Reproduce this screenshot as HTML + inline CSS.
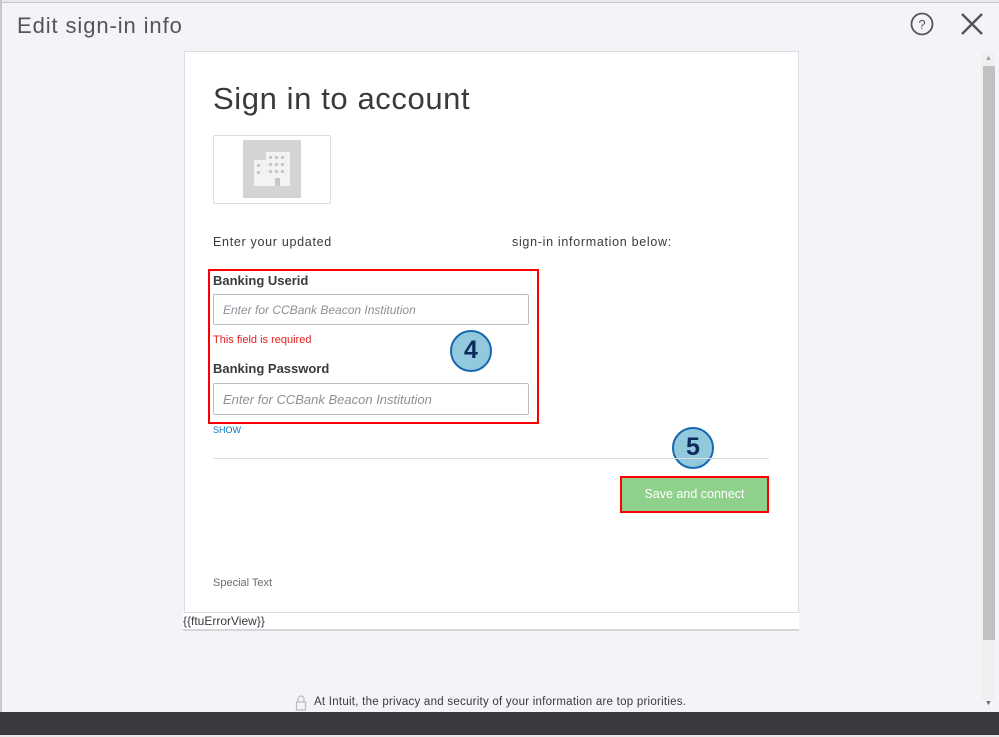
<!DOCTYPE html>
<html><head><style>
*{margin:0;padding:0;box-sizing:border-box}
body{width:999px;height:737px;overflow:hidden;background:#f3f4f7;font-family:"Liberation Sans",sans-serif;position:relative;color:#393a3d}
.a{position:absolute}
</style></head><body>
<div class="a" style="left:0;top:0;width:999px;height:3px;background:#e8e8ea;border-bottom:1px solid #c8c8cc"></div>
<div class="a" style="left:0;top:0;width:2px;height:712px;background:#c8c8cc"></div>
<div class="a" style="left:17px;top:13px;font-size:22px;color:#555;letter-spacing:0.9px">Edit sign-in info</div>
<svg class="a" style="left:910px;top:12px" width="26" height="26"><circle cx="12" cy="12" r="10.5" fill="none" stroke="#555" stroke-width="1.8"/><text x="12" y="17" font-size="13" text-anchor="middle" fill="#555" font-family="Liberation Sans">?</text></svg>
<svg class="a" style="left:960px;top:12px" width="24" height="24"><path d="M2 2L22 22M22 2L2 22" stroke="#555" stroke-width="2.4"/></svg>
<div class="a" style="left:981px;top:52px;width:14px;height:648px;background:#f0f0f0"></div>
<div class="a" style="left:983px;top:66px;width:12px;height:574px;background:#c1c1c1"></div>
<div class="a" style="left:985px;top:55px;font-size:7px;color:#999">▲</div>
<div class="a" style="left:985px;top:700px;font-size:7px;color:#666">▼</div>
<div class="a" style="left:184px;top:51px;width:615px;height:562px;background:#fff;border:1px solid #dcdde0"></div>
<div class="a" style="left:213px;top:81px;font-size:31px;color:#393a3d;letter-spacing:0.6px">Sign in to account</div>
<div class="a" style="left:213px;top:135px;width:118px;height:69px;border:1px solid #dcdde0;border-radius:2px;background:#fff"></div>
<div class="a" style="left:243px;top:140px;width:58px;height:58px;background:#d4d4d6"></div>
<svg class="a" style="left:243px;top:140px" width="58" height="58"><rect x="11" y="20" width="12" height="26" fill="#f3f3f3"/><rect x="23" y="12" width="24" height="34" fill="#f3f3f3"/><g fill="#c8c8c8"><rect x="14" y="24" width="3" height="3"/><rect x="14" y="31" width="3" height="3"/><rect x="26" y="16" width="3" height="3"/><rect x="32" y="16" width="3" height="3"/><rect x="38" y="16" width="3" height="3"/><rect x="26" y="23" width="3" height="3"/><rect x="32" y="23" width="3" height="3"/><rect x="38" y="23" width="3" height="3"/><rect x="26" y="30" width="3" height="3"/><rect x="32" y="30" width="3" height="3"/><rect x="38" y="30" width="3" height="3"/><rect x="32" y="38" width="5" height="8"/></g></svg>
<div class="a" style="left:213px;top:235px;font-size:12.5px;letter-spacing:0.7px">Enter your updated</div>
<div class="a" style="left:512px;top:235px;font-size:12.5px;letter-spacing:0.7px">sign-in information below:</div>
<div class="a" style="left:208px;top:269px;width:331px;height:155px;border:2px solid #f00"></div>
<div class="a" style="left:213px;top:273px;font-size:13px;font-weight:bold;color:#393a3d">Banking Userid</div>
<div class="a" style="left:213px;top:294px;width:316px;height:31px;border:1px solid #babec5;border-radius:2px;font-size:12px;font-style:italic;color:#8d9096;padding:8px 9px">Enter for CCBank Beacon Institution</div>
<div class="a" style="left:213px;top:334px;font-size:11px;color:#e02020">This field is required</div>
<div class="a" style="left:213px;top:361px;font-size:13px;font-weight:bold">Banking Password</div>
<div class="a" style="left:213px;top:383px;width:316px;height:32px;border:1px solid #babec5;border-radius:2px;font-size:13px;font-style:italic;color:#8d9096;padding:8px 9px">Enter for CCBank Beacon Institution</div>
<div class="a" style="left:213px;top:425px;font-size:9px;color:#0077c5">SHOW</div>
<div class="a" style="left:450px;top:330px;width:42px;height:42px;border-radius:50%;background:#92c9dd;border:2.5px solid #1668b0;text-align:center;font-size:25px;font-weight:bold;line-height:37px;color:#0e2a5a">4</div>
<div class="a" style="left:672px;top:427px;width:42px;height:42px;border-radius:50%;background:#92c9dd;border:2.5px solid #1668b0;text-align:center;font-size:25px;font-weight:bold;line-height:37px;color:#0e2a5a">5</div>
<div class="a" style="left:213px;top:458px;width:556px;height:1px;background:#dcdde0"></div>
<div class="a" style="left:620px;top:476px;width:149px;height:37px;border:2px solid #f00;background:#8fd08a;color:#fff;font-size:12.5px;text-align:center;line-height:32px">Save and connect</div>
<div class="a" style="left:213px;top:577px;font-size:11px;color:#6b6c72">Special Text</div>
<div class="a" style="left:183px;top:613px;width:616px;height:18px;background:#fff;border-bottom:2px solid #d4d5da;font-size:12px;line-height:17px;color:#393a3d">{{ftuErrorView}}</div>
<svg class="a" style="left:295px;top:695px" width="12" height="16"><path d="M3 7V4a3 3 0 0 1 6 0v3" fill="none" stroke="#bbb" stroke-width="1.2"/><rect x="1.5" y="7" width="9" height="8" fill="none" stroke="#bbb" stroke-width="1.2"/></svg>
<div class="a" style="left:314px;top:696px;font-size:11.5px;color:#393a3d;letter-spacing:0.25px">At Intuit, the privacy and security of your information are top priorities.</div>
<div class="a" style="left:0;top:712px;width:999px;height:25px;background:#393a3d"></div>
<div class="a" style="left:0;top:735px;width:999px;height:2px;background:#e8e8ea"></div>
</body></html>
